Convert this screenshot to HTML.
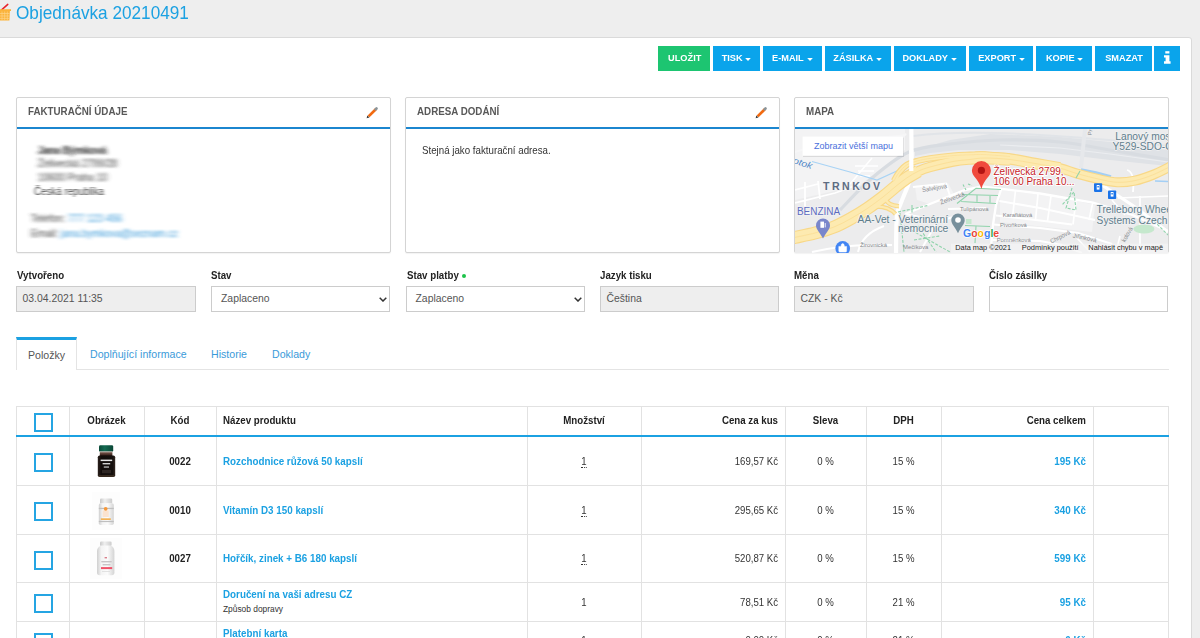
<!DOCTYPE html>
<html lang="cs">
<head>
<meta charset="utf-8">
<title>Objednávka 20210491</title>
<style>
html,body{margin:0;padding:0;}
body{width:1200px;height:638px;overflow:hidden;background:#eeeeee;font-family:"Liberation Sans",Arial,sans-serif;font-size:11px;color:#333;position:relative;}
.abs{position:absolute;}
#hdr{left:0;top:0;width:1200px;height:37px;background:#eeeeee;}
#title{left:15.6px;top:2.2px;font-size:17.9px;transform:scaleX(.96);transform-origin:0 0;color:#1ba1e2;white-space:nowrap;line-height:22px;}
#panel{left:-3px;top:37px;width:1193px;height:620px;background:#fff;border:1px solid #dadada;border-radius:3px;}
.btn{position:absolute;top:46px;height:25px;background:#0aa4eb;color:#fff;font-weight:bold;font-size:9.8px;line-height:23.6px;text-align:center;white-space:nowrap;}
.bt{display:inline-block;transform:scaleX(.94);margin:0 -2px 0 -1px;}
.btn.green{background:#1dc571;}
.caret{display:inline-block;vertical-align:middle;margin-left:3.6px;margin-top:1.5px;}
.card{position:absolute;top:97px;height:156px;border-radius:2px;background:#fff;border:1px solid #d4d4d4;box-sizing:border-box;box-shadow:0 1px 1px rgba(0,0,0,0.05);}
.card .ch{position:absolute;left:0;right:0;top:0;height:29px;border-bottom:2px solid #1b86cf;}
.card .ct{position:absolute;left:11px;top:8px;font-size:10.2px;font-weight:bold;color:#585858;transform:scaleX(.96);transform-origin:0 0;line-height:12px;white-space:nowrap;}
.lbl{position:absolute;top:269px;transform:scaleX(.875);transform-origin:0 0;font-weight:bold;font-size:11.1px;color:#222;line-height:13px;white-space:nowrap;}
.inp{position:absolute;top:286px;height:26px;width:179px;box-sizing:border-box;border:1px solid #ccc;background:#fff;font-size:10.4px;color:#555;line-height:24px;padding-left:5.5px;white-space:nowrap;}
.inp.dis{background:#eeeeee;}
.tab{position:absolute;top:347.5px;font-size:10.6px;color:#3a9ad9;line-height:13px;white-space:nowrap;}
table{border-collapse:collapse;}

#tbl .hl{position:absolute;left:0;width:1153px;height:1px;background:#e2e2e2;}
#tbl .bl{position:absolute;left:0;width:1153px;top:29px;height:2px;background:#1ba1e2;z-index:2;}
#tbl .vl{position:absolute;top:0;width:1px;height:240px;background:#e2e2e2;}
#tbl .cb{position:absolute;left:18px;width:19px;height:19px;box-sizing:border-box;border:2px solid #25a5e3;background:#fff;}
#tbl .th{position:absolute;top:8px;font-weight:bold;font-size:11.1px;transform:scaleX(.875);transform-origin:0 0;color:#222;line-height:13px;white-space:nowrap;}
#tbl .td{position:absolute;font-size:10.4px;transform:scaleX(.925);transform-origin:0 0;color:#333;line-height:13px;white-space:nowrap;}
#tbl .c{text-align:center;transform-origin:50% 0;}
#tbl .r{text-align:right;transform-origin:100% 0;}
#tbl .b{font-weight:bold;color:#222;font-size:11.1px;transform:scaleX(.875);}
#tbl .lk{font-weight:bold;color:#1ba1e2;font-size:11.1px;transform:scaleX(.885);}
#tbl .sm{font-size:8.4px;color:#333;transform:none;}
#tbl .q{border-bottom:1px dotted #333;}
.chev{position:absolute;right:1.6px;top:9.6px;}
.blur{position:absolute;white-space:nowrap;font-size:10.4px;line-height:13px;color:#444;filter:url(#smear);transform:scaleX(.94);transform-origin:0 0;}
.blur b{color:#222;}
.blur i{font-style:normal;color:#3a9ad9;}
</style>
</head>
<body>
<svg width="0" height="0" style="position:absolute"><defs>
<filter id="smear" x="-10%" y="-30%" width="120%" height="160%"><feGaussianBlur stdDeviation="2.6 0.8"/></filter>
<filter id="smear2" x="-10%" y="-30%" width="120%" height="160%"><feGaussianBlur stdDeviation="1.5 0.6"/></filter>
</defs></svg>
<div id="hdr" class="abs"></div>
<div id="title" class="abs">Objednávka 20210491</div>
<div id="panel" class="abs"></div>

<div class="btn green" style="left:658px;width:51.5px;"><span class="bt">ULOŽIT</span></div>
<div class="btn" style="left:712.5px;width:47.5px;"><span class="bt">TISK</span><svg class="caret" width="6" height="3" viewBox="0 0 6 3"><path d="M0.2 0 H5.8 L3 3Z" fill="#fff"/></svg></div>
<div class="btn" style="left:763.3px;width:58.7px;"><span class="bt">E-MAIL</span><svg class="caret" width="6" height="3" viewBox="0 0 6 3"><path d="M0.2 0 H5.8 L3 3Z" fill="#fff"/></svg></div>
<div class="btn" style="left:824.5px;width:66px;"><span class="bt">ZÁSILKA</span><svg class="caret" width="6" height="3" viewBox="0 0 6 3"><path d="M0.2 0 H5.8 L3 3Z" fill="#fff"/></svg></div>
<div class="btn" style="left:893.7px;width:72.3px;"><span class="bt">DOKLADY</span><svg class="caret" width="6" height="3" viewBox="0 0 6 3"><path d="M0.2 0 H5.8 L3 3Z" fill="#fff"/></svg></div>
<div class="btn" style="left:969.2px;width:64px;"><span class="bt">EXPORT</span><svg class="caret" width="6" height="3" viewBox="0 0 6 3"><path d="M0.2 0 H5.8 L3 3Z" fill="#fff"/></svg></div>
<div class="btn" style="left:1036.4px;width:55.6px;"><span class="bt">KOPIE</span><svg class="caret" width="6" height="3" viewBox="0 0 6 3"><path d="M0.2 0 H5.8 L3 3Z" fill="#fff"/></svg></div>
<div class="btn" style="left:1094.8px;width:57.2px;"><span class="bt">SMAZAT</span></div>
<div class="btn" style="left:1154px;width:25.5px;"></div>


<svg class="abs" style="left:0;top:2px;" width="14" height="22" viewBox="0 0 14 22">
<path d="M1.9 7.6 L7.8 2.4" stroke="#e8222a" stroke-width="1.5" stroke-linecap="round" fill="none"/>
<path d="M-1 7.2 H11 V9 H9.9 L9.4 18.6 H-1Z" fill="#fbb33a"/>
<path d="M-1 11.5 H9.6 M-1 14 H9.5 M-1 16.4 H9.4 M2 9.5 V18.4 M4.7 9.5 V18.4 M7.3 9.5 V18.4" stroke="#fdd48a" stroke-width="0.7" fill="none"/>
</svg>
<svg class="abs" style="z-index:5;left:365px;top:106px;" width="14" height="14" viewBox="365 106 14 14">
<path d="M368.6 116.4 L375.8 109.2" stroke="#f26a10" stroke-width="2.7" fill="none"/>
<path d="M375.6 109.4 L376.5 108.5" stroke="#8a9499" stroke-width="2.7" stroke-linecap="round" fill="none"/>
<path d="M366.6 118.2 L367.3 115.4 L369.5 117.6Z" fill="#3b3b3b"/>
</svg>
<svg class="abs" style="z-index:5;left:754px;top:106px;" width="14" height="14" viewBox="365 106 14 14">
<path d="M368.6 116.4 L375.8 109.2" stroke="#f26a10" stroke-width="2.7" fill="none"/>
<path d="M375.6 109.4 L376.5 108.5" stroke="#8a9499" stroke-width="2.7" stroke-linecap="round" fill="none"/>
<path d="M366.6 118.2 L367.3 115.4 L369.5 117.6Z" fill="#3b3b3b"/>
</svg>
<svg class="abs" style="left:1160px;top:49px;" width="14" height="18" viewBox="1160 49 14 18">
<rect x="1165.3" y="51.2" width="4.1" height="2.3" fill="#fff"/>
<path d="M1164 55.2 H1169.4 V61.2 H1170.6 V63.8 H1164 V61.2 H1165.6 V57.4 H1164Z" fill="#fff"/>
</svg>
<div class="card" style="left:16px;width:375px;"><div class="ch"></div><div class="ct">FAKTURAČNÍ ÚDAJE</div>
<div class="blur" style="left:21px;top:46px;"><b>Jana Býmková</b></div>
<div class="blur" style="left:21px;top:59px;">Želivecká 2799/28</div>
<div class="blur" style="left:21px;top:73px;">10600 Praha 10</div>
<div class="blur" style="left:17px;top:87px;filter:url(#smear2);">Česká republika</div>
<div class="blur" style="left:14px;top:114px;">Telefon: <i>777 123 456</i></div>
<div class="blur" style="left:14px;top:129px;">Email: <i>jana.bymkova@seznam.cz</i></div>
</div>
<div class="card" style="left:405px;width:375px;"><div class="ch"></div><div class="ct">ADRESA DODÁNÍ</div>
<div class="abs" style="left:15.5px;top:47px;font-size:10.2px;color:#333;white-space:nowrap;transform:scaleX(.955);transform-origin:0 0;">Stejná jako fakturační adresa.</div></div>
<div class="card" style="left:794px;width:375px;"><div class="ch"></div><div class="ct">MAPA</div></div>

<!--MAP--><svg class="abs" style="left:795px;top:129px;" width="373" height="124" viewBox="795 129 373 124" font-family="Liberation Sans, Arial, sans-serif">
<rect x="795" y="129" width="373" height="124" fill="#ececed"/>
<g fill="#f3f3f4">
<path d="M795 129 H905 V150 L860 185 L795 200Z"/>
<path d="M915 186 L948 183 L955 196 L930 204 L917 200Z"/>
<path d="M1000 190 L1060 197 L1095 205 L1092 232 L1000 222Z"/>
</g>
<path d="M990 134 L1060 137 L1110 142 L1168 150 L1168 166 L1110 160 L1060 154 L1010 150 L960 150 L930 153 L915 156 L915 150 L950 140Z" fill="#dfe2e6"/>
<g fill="none">
<path d="M840.0 210.0 C845.3 204.7 860.5 187.7 872.0 178.0 C883.5 168.3 896.0 157.7 909.0 152.0 C922.0 146.3 934.8 146.0 950.0 144.0 C965.2 142.0 981.7 140.3 1000.0 140.0 C1018.3 139.7 1041.7 140.3 1060.0 142.0 C1078.3 143.7 1091.7 147.0 1110.0 150.0 C1128.3 153.0 1160.0 158.3 1170.0 160.0" stroke="#d8dce1" stroke-width="3.2"/>
<path d="M913 136 Q960 130 1040 135 T1168 146" stroke="#e1e4e8" stroke-width="2"/>
<path d="M795 152 Q830 140 870 138 T905 134" stroke="#f6f6f7" stroke-width="2"/>
<path d="M1000 145 L1060 148 L1110 154 L1168 162" stroke="#ebedf0" stroke-width="1.2"/>
<path d="M1085 129 L1081 168" stroke="#e6e8eb" stroke-width="4"/>
</g>
<g fill="none" stroke="#fff" stroke-width="2">
<path d="M911.3 126.0 C911.3 133.7 911.8 162.3 911.3 172.0 C910.8 181.7 910.4 178.5 908.5 184.0 C906.6 189.5 902.2 199.3 900.2 204.8 C898.2 210.3 897.5 208.5 896.8 217.0 C896.1 225.5 896.1 249.5 896.0 256.0" stroke-width="4.2"/>
<path d="M855 166 H878 M858 171 H874 M860 176 H870" stroke-width="1.6"/>
<path d="M850 184 L872 158" stroke-width="1.5"/>
<path d="M795 203 L835 193 L860 184 M805 182 V214 M818 181 L820 199 M795 190 L818 184 M800 214 L812 212" stroke-width="1.8"/>
<path d="M913 187 L946 183.5 L950 196"/>
<path d="M905 214 L930 204 L965 190 L982 186.5 L1002 189 L1040 193.5 L1093 202.6 L1130 214 L1168 231" stroke-width="2.4"/>
<path d="M948 209 L988 208 M940 221 L960 215"/>
<path d="M905 214 L940 221 M920 252 L935 225"/>
<path d="M1001.5 188 L996 205 L993 225 L990.5 252" stroke-width="2.4"/>
<path d="M999.4 201 L1040 208 L1095 220 M996 215.5 L1040 220.5 L1072 224.5 M993.4 224.6 L1040 228 L1078 233 L1112 244 M992.3 240 L1040 241 L1062 245 L1082 253"/>
<path d="M1015.5 190.5 L1012.5 217 M1038 194 L1035.5 220 M1051 196 L1047.5 221 M1076 200 L1073 224.5 M1092.7 203 L1089 220" stroke-width="1.7"/>
<path d="M858 252 Q862 234 884 226 M812 252 Q850 243 892 245"/>
<path d="M1099 183 L1135 207 L1168 232" stroke-width="3.2"/>
<path d="M1127 170 Q1135 172 1133 192" stroke-width="1.8"/>
<path d="M1140 196 V252 M1118 198 L1168 196 M1112 200 L1125 215" stroke-width="1.7"/>
<path d="M1075 236 L1090 252 M1120 236 L1116 252" stroke-width="1.6"/>
</g>
<path d="M812 161.5 L850 172 L877 180 L899 170" fill="none" stroke="#a8d3f5" stroke-width="1.2"/>
<path d="M1081 169.6 L1096 172.6 L1111 176.6" fill="none" stroke="#a3cff5" stroke-width="2.6"/>
<path d="M1155 181 L1168 181.5" fill="none" stroke="#a3cff5" stroke-width="1.6"/>
<g fill="none">
<path d="M894.0 181.0 C894.8 179.6 896.8 175.2 899.0 172.5 C901.2 169.8 903.8 166.8 907.0 164.8 C910.2 162.9 914.2 161.9 918.0 160.8 C921.8 159.7 924.2 159.3 930.0 158.4 C935.8 157.5 946.3 156.2 953.0 155.6 C959.7 155.0 964.7 155.0 970.0 154.8 C975.3 154.6 978.3 154.3 985.0 154.6 C991.7 154.9 1005.8 156.2 1010.0 156.5" stroke="#f8d888" stroke-width="6.4"/>
<path d="M876.5 206.5 Q889 206.5 895.5 214 M885.6 197.6 Q886.5 205.4 899 206.2" stroke="#f8d888" stroke-width="4.4"/>
<path d="M1035.0 163.5 C1039.2 164.3 1053.0 166.5 1060.0 168.2 C1067.0 169.9 1070.3 171.7 1077.0 173.6 C1083.7 175.5 1093.2 177.9 1100.0 179.4 C1106.8 180.9 1111.7 182.1 1117.5 182.3 C1123.3 182.5 1129.2 181.8 1135.0 180.6 C1140.8 179.4 1147.0 177.2 1152.5 175.0 C1158.0 172.8 1163.4 170.0 1168.0 167.7 C1172.6 165.4 1178.0 162.1 1180.0 161.0" stroke="#f8d888" stroke-width="10.0"/>
<path d="M975.0 157.4 C976.7 157.3 979.2 156.8 985.0 157.1 C990.8 157.4 1001.7 157.9 1010.0 159.0 C1018.3 160.1 1026.7 162.0 1035.0 163.5 C1043.3 165.0 1055.8 167.2 1060.0 167.9" stroke="#f8d888" stroke-width="11.5"/>
<path d="M895.0 187.0 C897.0 185.5 902.8 180.6 906.7 178.0 C910.6 175.4 914.4 173.0 918.3 171.2 C922.2 169.4 924.2 168.6 930.0 167.0 C935.8 165.4 946.3 162.8 953.0 161.5 C959.7 160.2 964.7 159.9 970.0 159.5 C975.3 159.1 978.3 158.8 985.0 159.0 C991.7 159.2 1005.8 160.2 1010.0 160.5" stroke="#f8d888" stroke-width="10.5"/>
<path d="M788.0 239.0 C789.2 238.7 790.5 238.4 795.0 237.4 C799.5 236.4 808.5 234.7 815.0 233.0 C821.5 231.3 828.0 229.4 834.0 227.0 C840.0 224.6 845.5 221.6 851.0 218.5 C856.5 215.4 861.7 212.3 867.0 208.7 C872.3 205.1 878.3 200.6 883.0 197.0 C887.7 193.4 891.0 190.2 895.0 187.0 C899.0 183.8 902.8 180.6 906.7 178.0 C910.6 175.4 916.4 172.3 918.3 171.2" stroke="#f8d888" stroke-width="13.0"/>
<path d="M894.0 181.0 C894.8 179.6 896.8 175.2 899.0 172.5 C901.2 169.8 903.8 166.8 907.0 164.8 C910.2 162.9 914.2 161.9 918.0 160.8 C921.8 159.7 924.2 159.3 930.0 158.4 C935.8 157.5 946.3 156.2 953.0 155.6 C959.7 155.0 964.7 155.0 970.0 154.8 C975.3 154.6 978.3 154.3 985.0 154.6 C991.7 154.9 1005.8 156.2 1010.0 156.5" stroke="#fdeab0" stroke-width="4.2"/>
<path d="M876.5 206.5 Q889 206.5 895.5 214 M885.6 197.6 Q886.5 205.4 899 206.2" stroke="#fdeab0" stroke-width="2.2"/>
<path d="M1035.0 163.5 C1039.2 164.3 1053.0 166.5 1060.0 168.2 C1067.0 169.9 1070.3 171.7 1077.0 173.6 C1083.7 175.5 1093.2 177.9 1100.0 179.4 C1106.8 180.9 1111.7 182.1 1117.5 182.3 C1123.3 182.5 1129.2 181.8 1135.0 180.6 C1140.8 179.4 1147.0 177.2 1152.5 175.0 C1158.0 172.8 1163.4 170.0 1168.0 167.7 C1172.6 165.4 1178.0 162.1 1180.0 161.0" stroke="#fdeab0" stroke-width="7.8"/>
<path d="M975.0 157.4 C976.7 157.3 979.2 156.8 985.0 157.1 C990.8 157.4 1001.7 157.9 1010.0 159.0 C1018.3 160.1 1026.7 162.0 1035.0 163.5 C1043.3 165.0 1055.8 167.2 1060.0 167.9" stroke="#fdeab0" stroke-width="9.3"/>
<path d="M895.0 187.0 C897.0 185.5 902.8 180.6 906.7 178.0 C910.6 175.4 914.4 173.0 918.3 171.2 C922.2 169.4 924.2 168.6 930.0 167.0 C935.8 165.4 946.3 162.8 953.0 161.5 C959.7 160.2 964.7 159.9 970.0 159.5 C975.3 159.1 978.3 158.8 985.0 159.0 C991.7 159.2 1005.8 160.2 1010.0 160.5" stroke="#fdeab0" stroke-width="8.3"/>
<path d="M788.0 239.0 C789.2 238.7 790.5 238.4 795.0 237.4 C799.5 236.4 808.5 234.7 815.0 233.0 C821.5 231.3 828.0 229.4 834.0 227.0 C840.0 224.6 845.5 221.6 851.0 218.5 C856.5 215.4 861.7 212.3 867.0 208.7 C872.3 205.1 878.3 200.6 883.0 197.0 C887.7 193.4 891.0 190.2 895.0 187.0 C899.0 183.8 902.8 180.6 906.7 178.0 C910.6 175.4 916.4 172.3 918.3 171.2" stroke="#fdeab0" stroke-width="10.8"/>
<path d="M788.0 239.0 C789.2 238.7 790.5 238.4 795.0 237.4 C799.5 236.4 808.5 234.7 815.0 233.0 C821.5 231.3 828.0 229.4 834.0 227.0 C840.0 224.6 845.5 221.6 851.0 218.5 C856.5 215.4 861.7 212.3 867.0 208.7 C872.3 205.1 878.3 200.6 883.0 197.0 C887.7 193.4 891.0 190.2 895.0 187.0 C899.0 183.8 902.8 180.6 906.7 178.0 C910.6 175.4 914.4 173.0 918.3 171.2 C922.2 169.4 924.2 168.6 930.0 167.0 C935.8 165.4 946.3 162.8 953.0 161.5 C959.7 160.2 964.7 160.1 970.0 159.5 C975.3 158.9 978.3 158.0 985.0 158.0 C991.7 158.0 1001.7 158.6 1010.0 159.5 C1018.3 160.4 1026.7 162.1 1035.0 163.5 C1043.3 164.9 1053.0 166.5 1060.0 168.2 C1067.0 169.9 1070.3 171.7 1077.0 173.6 C1083.7 175.5 1093.2 177.9 1100.0 179.4 C1106.8 180.9 1111.7 182.1 1117.5 182.3 C1123.3 182.5 1129.2 181.8 1135.0 180.6 C1140.8 179.4 1147.0 177.2 1152.5 175.0 C1158.0 172.8 1163.4 170.0 1168.0 167.7 C1172.6 165.4 1178.0 162.1 1180.0 161.0" stroke="#fbe09a" stroke-width="1"/>
<path d="M894.0 181.0 C894.8 179.6 896.8 175.2 899.0 172.5 C901.2 169.8 903.8 166.8 907.0 164.8 C910.2 162.9 914.2 161.9 918.0 160.8 C921.8 159.7 924.2 159.3 930.0 158.4 C935.8 157.5 946.3 156.2 953.0 155.6 C959.7 155.0 964.7 155.0 970.0 154.8 C975.3 154.6 978.3 154.3 985.0 154.6 C991.7 154.9 1005.8 156.2 1010.0 156.5" stroke="#fbe09a" stroke-width="0.8"/>
</g>
<path d="M911.3 150 V171" stroke="#fff" stroke-width="4.2" fill="none"/>
<!-- park -->
<ellipse cx="1144" cy="229" rx="10.5" ry="4.6" fill="#c5e8cd"/>
<rect x="966" y="219" width="5.5" height="5" fill="#c5e8cd"/>
<!-- green paths -->
<g fill="none" stroke="#8fd3ab" stroke-width="1.1">
<path d="M957 203.5 L976 188.2 L1001 189.5 M962 194.5 L998 195.5 M961 201.5 L996 203.5 M977 194.5 V201.8 M990 195 V202.5"/>
<path d="M963 184.5 L966 190 M968 184 L972 185.5" stroke-dasharray="2.5 1.5"/>
<path d="M965 225.5 L990 226.5 M976 226 L975 243"/>
<path d="M898 212 L928 205.5 M900 213 L904 252 M904 226 L950 252 M914 240 L940 236 M918 226 L936 252 M912 205 L912 214" stroke-dasharray="3 1.5"/>
<path d="M1072 188 L1066 208 L1076 210 L1074 192 L1062 205" stroke-dasharray="3 1.5"/>
<path d="M1080 171 L1076 178" />
<path d="M1154 221 L1168 235" stroke-dasharray="3 1.5"/>
</g>
<!-- street labels -->
<g font-size="6.2" fill="#85888c">
<text transform="translate(922.5 192) rotate(-9)" textLength="25" lengthAdjust="spacingAndGlyphs">Šalvějová</text>
<text transform="translate(941 204.5) rotate(-20)" textLength="25.5" lengthAdjust="spacingAndGlyphs">Želivecká</text>
<text x="960" y="210.5" textLength="28.4" lengthAdjust="spacingAndGlyphs">Tulipánová</text>
<text x="1002.7" y="217" textLength="29.6" lengthAdjust="spacingAndGlyphs">Karafiátová</text>
<text x="1000" y="227" textLength="26.8" lengthAdjust="spacingAndGlyphs">Pivoňková</text>
<text x="996.7" y="241.8" textLength="34" lengthAdjust="spacingAndGlyphs">Pomněnková</text>
<text x="860" y="246.6" textLength="27" lengthAdjust="spacingAndGlyphs">Žirovnická</text>
<text x="903" y="248.6" textLength="25.2" lengthAdjust="spacingAndGlyphs">Mečíkova</text>
<text transform="translate(1051.5 243.6) rotate(-27)" textLength="21.6" lengthAdjust="spacingAndGlyphs">Chrpová</text>
<text transform="translate(1072.6 237.4) rotate(12)" textLength="24" lengthAdjust="spacingAndGlyphs">Jiřinková</text>
<text transform="translate(1125 242.5) rotate(-60)" textLength="16" lengthAdjust="spacingAndGlyphs">kolová</text>
<text transform="translate(1091.5 135.5) rotate(-80)" font-size="5.6">Pr</text>
</g>
<!-- POI labels -->
<text transform="translate(792.5 163) rotate(18)" font-size="9" font-style="italic" fill="#4f86c6" textLength="19.5" lengthAdjust="spacingAndGlyphs">otok</text>
<text x="823" y="190" font-size="10.6" font-weight="bold" fill="#5d6c82" stroke="#f3f3f4" stroke-width="1.6" paint-order="stroke" textLength="57" lengthAdjust="spacing">TRNKOV</text>
<text x="797" y="214.8" font-size="10" fill="#5c6bc0" stroke="#f3f3f4" stroke-width="1.2" paint-order="stroke" textLength="43" lengthAdjust="spacingAndGlyphs">BENZINA</text>
<g fill="#5f7d8c" font-size="10.5" stroke="#f1f2f3" stroke-width="1.4" paint-order="stroke">
<text x="857.6" y="222.6" textLength="90.4" lengthAdjust="spacingAndGlyphs">AA-Vet - Veterinární</text>
<text x="898" y="232.2" textLength="50.4" lengthAdjust="spacingAndGlyphs">nemocnice</text>
<text x="1115.3" y="139.5" textLength="58" lengthAdjust="spacingAndGlyphs">Lanový most</text>
<text x="1112.5" y="149.9" textLength="67.5" lengthAdjust="spacingAndGlyphs">Y529-SDO-ČR</text>
<text x="1096.6" y="213" textLength="77.5" lengthAdjust="spacingAndGlyphs">Trelleborg Wheel</text>
<text x="1096.6" y="223.6" textLength="70.9" lengthAdjust="spacingAndGlyphs">Systems Czech</text>
</g>
<!-- pins -->
<path d="M823 238.5 C819.5 231.5 816 229.5 816 225.4 A7 7 0 0 1 830 225.4 C830 229.5 826.5 231.5 823 238.5Z" fill="#7986cb"/>
<rect x="820.4" y="221.6" width="3.6" height="6.2" fill="#fff"/><path d="M825.2 223 V227.4" stroke="#fff" stroke-width="0.9"/>
<circle cx="842.7" cy="248.4" r="7.3" fill="#4285f4"/>
<path d="M838.8 246.4 H846.6 V251 Q846.6 252 845.6 252 H839.8 Q838.8 252 838.8 251Z M841 246.4 Q841 243.6 842.7 243.6 Q844.4 243.6 844.4 246.4" fill="#fff" stroke="#fff" stroke-width="0.5" fill-rule="evenodd"/>
<path d="M958 233.2 C954.6 226 951.3 224 951.3 220.2 A6.7 6.7 0 0 1 964.7 220.2 C964.7 224 961.4 226 958 233.2Z" fill="#78909c"/>
<circle cx="958" cy="220" r="2.8" fill="#fff"/>
<path d="M981.4 189 C978.4 178.5 971.9 176.6 971.9 170.6 A9.5 9.5 0 0 1 990.9 170.6 C990.9 176.6 984.4 178.5 981.4 189Z" fill="#f04a3d"/>
<circle cx="981.4" cy="170.4" r="3.6" fill="#b31412"/>
<rect x="1094" y="183.3" width="8.2" height="8.6" rx="0.8" fill="#1a73e8"/><rect x="1096.7" y="185" width="2.8" height="4.6" fill="#fff"/><rect x="1097.4" y="186" width="1.4" height="1.5" fill="#1a73e8"/>
<rect x="1108" y="190.4" width="8.2" height="8.6" rx="0.8" fill="#1a73e8"/><rect x="1110.7" y="192" width="2.8" height="4.6" fill="#fff"/><rect x="1111.4" y="193" width="1.4" height="1.5" fill="#1a73e8"/>
<g font-size="10.6" fill="#c5221f" stroke="#fff" stroke-width="1.8" paint-order="stroke" stroke-linejoin="round">
<text x="993.5" y="174.6" textLength="70.1" lengthAdjust="spacingAndGlyphs">Želivecká 2799,</text>
<text x="993.5" y="184.5" textLength="81.1" lengthAdjust="spacingAndGlyphs">106 00 Praha 10...</text>
</g>
<!-- show bigger map -->
<rect x="803" y="137.6" width="101" height="19.4" fill="#000" opacity="0.10"/>
<rect x="802.6" y="136.6" width="100.6" height="19.2" fill="#fff"/>
<text x="814" y="148.6" font-size="9.6" fill="#4a6fdc" textLength="79" lengthAdjust="spacingAndGlyphs">Zobrazit větší mapu</text>
<!-- google logo -->
<text x="963" y="237.4" font-size="11.3" font-weight="bold" stroke="#fff" stroke-width="1.4" paint-order="stroke" stroke-linejoin="round" textLength="36.2" lengthAdjust="spacingAndGlyphs"><tspan fill="#4285f4">G</tspan><tspan fill="#ea4335">o</tspan><tspan fill="#fbbc05">o</tspan><tspan fill="#4285f4">g</tspan><tspan fill="#34a853">l</tspan><tspan fill="#ea4335">e</tspan></text>
<!-- attribution -->
<rect x="951" y="243.6" width="217" height="9.4" fill="#f5f5f5" opacity="0.7"/>
<g font-size="7.4" fill="#222">
<text x="955.3" y="250.4" textLength="55.7" lengthAdjust="spacingAndGlyphs">Data map ©2021</text>
<text x="1021.7" y="250.4" textLength="56.9" lengthAdjust="spacingAndGlyphs">Podmínky použití</text>
<text x="1088.3" y="250.4" textLength="74.7" lengthAdjust="spacingAndGlyphs">Nahlásit chybu v mapě</text>
</g>
</svg>
<!--/MAP-->
<div class="lbl" style="left:17px;">Vytvořeno</div>
<div class="lbl" style="left:211px;">Stav</div>
<div class="lbl" style="left:406.5px;">Stav platby</div>
<div class="abs" style="left:461.8px;top:274px;width:4px;height:4px;border-radius:50%;background:#1dc34a;"></div>
<div class="lbl" style="left:600px;">Jazyk tisku</div>
<div class="lbl" style="left:794px;">Měna</div>
<div class="lbl" style="left:989px;">Číslo zásilky</div>

<div class="inp dis" style="left:16px;width:180px;">03.04.2021 11:35</div>
<div class="inp" style="left:211px;padding-left:9px;">Zaplaceno<svg class="chev" width="8" height="5" viewBox="0 0 8 5"><path d="M0.7 0.7 L4 4 L7.3 0.7" fill="none" stroke="#333" stroke-width="1.5"/></svg></div>
<div class="inp" style="left:406px;width:179px;padding-left:8.5px;">Zaplaceno<svg class="chev" width="8" height="5" viewBox="0 0 8 5"><path d="M0.7 0.7 L4 4 L7.3 0.7" fill="none" stroke="#333" stroke-width="1.5"/></svg></div>
<div class="inp dis" style="left:600px;">Čeština</div>
<div class="inp dis" style="left:794px;width:180px;">CZK - Kč</div>
<div class="inp" style="left:989px;"></div>


<!-- tabs -->
<div class="abs" style="left:17px;top:369px;width:1152px;height:1px;background:#e4e4e4;"></div>
<div class="abs" style="left:16px;top:337px;width:61px;height:33px;box-sizing:border-box;border-top:3px solid #1ba1e2;border-left:1px solid #e4e4e4;border-right:1px solid #e4e4e4;background:#fff;"></div>
<div class="tab" style="left:28px;top:349px;color:#555;">Položky</div>
<div class="tab" style="left:90px;">Doplňující informace</div>
<div class="tab" style="left:211px;">Historie</div>
<div class="tab" style="left:272px;">Doklady</div>

<!-- table -->
<div id="tbl" class="abs" style="left:16px;top:406px;width:1153px;height:240px;">
  <div class="hl" style="top:0;"></div>
  <div class="bl"></div>
  <div class="hl" style="top:79px;"></div>
  <div class="hl" style="top:128px;"></div>
  <div class="hl" style="top:176px;"></div>
  <div class="hl" style="top:215px;"></div>
  <div class="vl" style="left:0;"></div>
  <div class="vl" style="left:53px;"></div>
  <div class="vl" style="left:128px;"></div>
  <div class="vl" style="left:200px;"></div>
  <div class="vl" style="left:511px;"></div>
  <div class="vl" style="left:625px;"></div>
  <div class="vl" style="left:769px;"></div>
  <div class="vl" style="left:850px;"></div>
  <div class="vl" style="left:925px;"></div>
  <div class="vl" style="left:1077px;"></div>
  <div class="vl" style="left:1152px;"></div>

  <div class="cb" style="top:7px;"></div>
  <div class="cb" style="top:47px;"></div>
  <div class="cb" style="top:96px;"></div>
  <div class="cb" style="top:145px;"></div>
  <div class="cb" style="top:188px;"></div>
  <div class="cb" style="top:227px;"></div>

  
<svg class="abs" style="left:72px;top:34px;" width="50" height="140" viewBox="88 440 50 140">
<defs>
<linearGradient id="gw" x1="0" x2="1" y1="0" y2="0"><stop offset="0" stop-color="#cfcfcf"/><stop offset="0.25" stop-color="#f4f4f4"/><stop offset="0.6" stop-color="#fbfbfb"/><stop offset="1" stop-color="#d4d4d4"/></linearGradient>
<linearGradient id="gc" x1="0" x2="1" y1="0" y2="0"><stop offset="0" stop-color="#c9c9c9"/><stop offset="0.4" stop-color="#efefef"/><stop offset="1" stop-color="#cdcdcd"/></linearGradient>
<linearGradient id="gn" x1="0" x2="0" y1="0" y2="1"><stop offset="0" stop-color="#cbbfb8"/><stop offset="0.35" stop-color="#6b4a40"/><stop offset="1" stop-color="#22100c"/></linearGradient>
<linearGradient id="gb" x1="0" x2="1" y1="0" y2="0"><stop offset="0" stop-color="#2a201c"/><stop offset="0.2" stop-color="#120c0a"/><stop offset="0.85" stop-color="#15100e"/><stop offset="1" stop-color="#33261f"/></linearGradient>
<linearGradient id="gg" x1="0" x2="1" y1="0" y2="0"><stop offset="0" stop-color="#0a4a39"/><stop offset="0.4" stop-color="#146a52"/><stop offset="1" stop-color="#0a4636"/></linearGradient>
</defs>
<!-- bottle 1 -->
<rect x="99" y="445.2" width="14.2" height="6.6" rx="1.4" fill="url(#gg)"/>
<rect x="99.8" y="451.4" width="12.6" height="4.8" fill="url(#gn)"/>
<rect x="97.8" y="455.4" width="17.4" height="21.6" rx="1.8" fill="url(#gb)"/>
<rect x="100.6" y="459.6" width="11.6" height="1.5" fill="#e6e6e6"/><rect x="102.6" y="463" width="7.6" height="1.4" fill="#d2d2d2"/><rect x="103.8" y="466.4" width="5.2" height="1.3" fill="#bdbdbd"/>
<rect x="102" y="470" width="9" height="3.2" fill="#2e2623"/>
<rect x="98.6" y="475.4" width="15.8" height="1.2" rx="0.6" fill="#5a4632"/>
<!-- bottle 2 -->
<rect x="92" y="492" width="28" height="38" fill="#fdfdfd"/>
<rect x="100" y="498.6" width="12.2" height="5" rx="1.2" fill="url(#gc)"/>
<rect x="98.8" y="503.2" width="15" height="21.8" rx="1.8" fill="url(#gw)"/>
<rect x="98.8" y="507.8" width="15" height="1.3" fill="#bfbfbf"/><rect x="98.8" y="520.9" width="15" height="1.2" fill="#bfbfbf"/>
<rect x="102.6" y="510.4" width="6.2" height="6.6" fill="#fbe3cf"/>
<circle cx="105.7" cy="508.8" r="1.9" fill="#f5973a"/>
<rect x="100.8" y="518.3" width="10" height="1.7" fill="#f3b256"/>
<!-- bottle 3 -->
<rect x="90" y="538" width="32" height="41" fill="#fdfdfd"/>
<rect x="100" y="541.6" width="11.6" height="4.4" rx="1.2" fill="url(#gc)"/>
<path d="M101.5 545.6 H110.5 Q114.4 547.4 114.4 551 V572.6 Q114.4 575.2 111.8 575.2 H99.6 Q97 575.2 97 572.6 V551 Q97 547.4 101.5 545.6Z" fill="url(#gw)"/>
<rect x="104.6" y="557" width="2.4" height="1.4" fill="#d9808c"/>
<rect x="101.3" y="561" width="10.4" height="1.4" fill="#c9c4c6"/><rect x="102.6" y="564" width="7.8" height="1.4" fill="#c9c4c6"/>
<rect x="101" y="567.1" width="11.2" height="2" fill="#f0546a"/>
<rect x="102" y="571.2" width="8" height="0.8" fill="#dcdcdc"/>
</svg>
<div class="th c" style="left:53px;width:75px;">Obrázek</div>
  <div class="th c" style="left:128px;width:72px;">Kód</div>
  <div class="th" style="left:207px;">Název produktu</div>
  <div class="th c" style="left:511px;width:114px;">Množství</div>
  <div class="th r" style="left:625px;width:137px;">Cena za kus</div>
  <div class="th c" style="left:769px;width:81px;">Sleva</div>
  <div class="th c" style="left:850px;width:75px;">DPH</div>
  <div class="th r" style="left:925px;width:145px;">Cena celkem</div>

  <!-- row 1 -->
  <div class="td c b" style="top:49px;left:128px;width:72px;">0022</div>
  <div class="td lk" style="top:49px;left:207px;">Rozchodnice růžová 50 kapslí</div>
  <div class="td c" style="top:49px;left:511px;width:114px;"><span class="q">1</span></div>
  <div class="td r" style="top:49px;left:625px;width:137px;">169,57 Kč</div>
  <div class="td c" style="top:49px;left:769px;width:81px;">0 %</div>
  <div class="td c" style="top:49px;left:850px;width:75px;">15 %</div>
  <div class="td r lk" style="top:49px;left:925px;width:145px;">195 Kč</div>
  <!-- row 2 -->
  <div class="td c b" style="top:98px;left:128px;width:72px;">0010</div>
  <div class="td lk" style="top:98px;left:207px;">Vitamín D3 150 kapslí</div>
  <div class="td c" style="top:98px;left:511px;width:114px;"><span class="q">1</span></div>
  <div class="td r" style="top:98px;left:625px;width:137px;">295,65 Kč</div>
  <div class="td c" style="top:98px;left:769px;width:81px;">0 %</div>
  <div class="td c" style="top:98px;left:850px;width:75px;">15 %</div>
  <div class="td r lk" style="top:98px;left:925px;width:145px;">340 Kč</div>
  <!-- row 3 -->
  <div class="td c b" style="top:146px;left:128px;width:72px;">0027</div>
  <div class="td lk" style="top:146px;left:207px;">Hořčík, zinek + B6 180 kapslí</div>
  <div class="td c" style="top:146px;left:511px;width:114px;"><span class="q">1</span></div>
  <div class="td r" style="top:146px;left:625px;width:137px;">520,87 Kč</div>
  <div class="td c" style="top:146px;left:769px;width:81px;">0 %</div>
  <div class="td c" style="top:146px;left:850px;width:75px;">15 %</div>
  <div class="td r lk" style="top:146px;left:925px;width:145px;">599 Kč</div>
  <!-- row 4 -->
  <div class="td lk" style="top:182px;left:207px;">Doručení na vaši adresu CZ</div>
  <div class="td sm" style="top:197px;left:207px;">Způsob dopravy</div>
  <div class="td c" style="top:190px;left:511px;width:114px;">1</div>
  <div class="td r" style="top:190px;left:625px;width:137px;">78,51 Kč</div>
  <div class="td c" style="top:190px;left:769px;width:81px;">0 %</div>
  <div class="td c" style="top:190px;left:850px;width:75px;">21 %</div>
  <div class="td r lk" style="top:190px;left:925px;width:145px;">95 Kč</div>
  <!-- row 5 -->
  <div class="td lk" style="top:221px;left:207px;">Platební karta</div>
  <div class="td c" style="top:228px;left:511px;width:114px;">1</div>
  <div class="td r" style="top:228px;left:625px;width:137px;">0,00 Kč</div>
  <div class="td c" style="top:228px;left:769px;width:81px;">0 %</div>
  <div class="td c" style="top:228px;left:850px;width:75px;">21 %</div>
  <div class="td r lk" style="top:228px;left:925px;width:145px;">0 Kč</div>
</div>
</body>
</html>
